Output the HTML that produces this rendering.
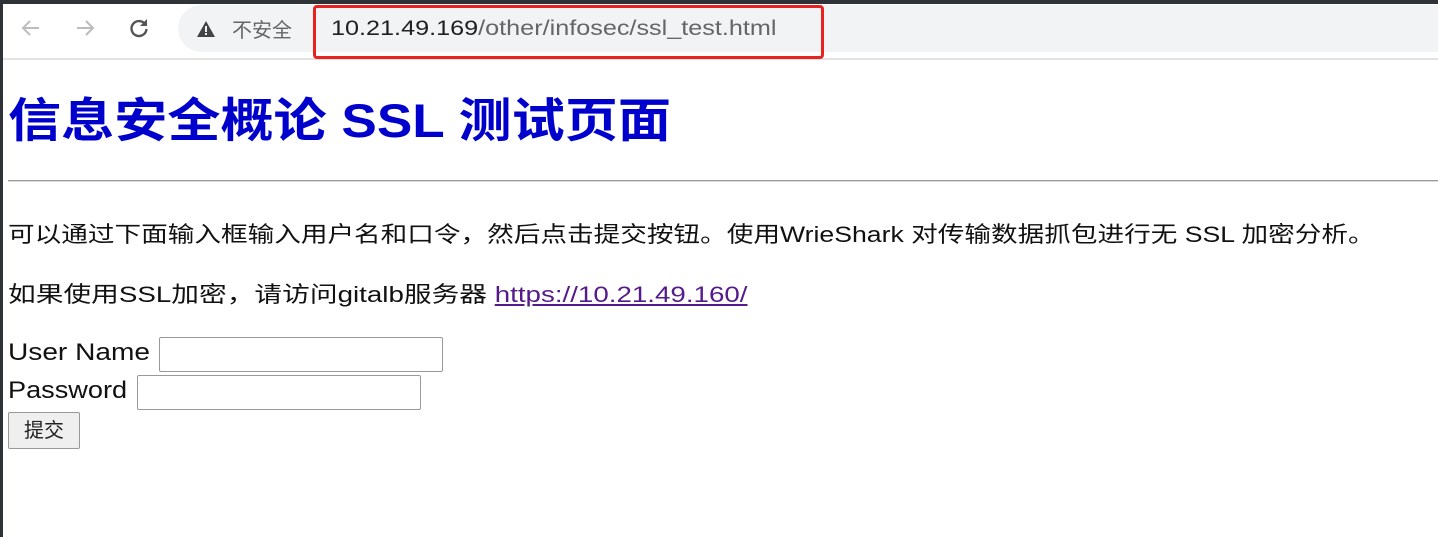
<!DOCTYPE html>
<html><head><meta charset="utf-8"><style>
*{margin:0;padding:0;box-sizing:border-box}
body{width:1438px;height:537px;overflow:hidden;background:#fff;position:relative;font-family:"Liberation Sans","Noto Sans CJK SC",sans-serif}
.a{position:absolute;white-space:nowrap}
.s{transform-origin:0 50%}
</style></head><body>
<div class="a" style="left:0;top:0;width:1438px;height:4px;background:#2f3337"></div>
<div class="a" style="left:0;top:0;width:3px;height:537px;background:#2f3337"></div>
<div class="a" style="left:178px;top:5px;width:1260px;height:47px;background:#f1f3f4;border-radius:24px 0 0 24px"></div>
<div class="a" style="left:3px;top:58px;width:1435px;height:2px;background:#e3e3e3"></div>
<svg class="a" style="left:20px;top:17px" width="22" height="22" viewBox="0 0 22 22"><path d="M19 11H4M10 4L3 11l7 7" stroke="#bcbcbc" stroke-width="2" fill="none"/></svg>
<svg class="a" style="left:74px;top:17px" width="22" height="22" viewBox="0 0 22 22"><path d="M3 11h15M12 4l7 7-7 7" stroke="#bcbcbc" stroke-width="2" fill="none"/></svg>
<svg class="a" style="left:127px;top:16px" width="24" height="24" viewBox="0 0 24 24"><path d="M18 8A7.5 7.5 0 1 0 19.5 13" stroke="#555" stroke-width="2.4" fill="none"/><path d="M20 3v7h-7z" fill="#555"/></svg>
<svg class="a" style="left:196px;top:20px" width="20" height="18" viewBox="0 0 20 18"><path d="M10 1L19 17H1z" fill="#444"/><rect x="9" y="6" width="2" height="6" fill="#f1f3f4"/><rect x="9" y="13" width="2" height="2" fill="#f1f3f4"/></svg>
<div class="a" style="left:232px;top:14px;font-size:20px;color:#666">不安全</div>
<div class="a" style="left:313px;top:5px;width:511px;height:54px;border:3px solid #e8231f;border-radius:4px"></div>
<div class="a s" style="left:331px;top:17px;font-size:21px;color:#202124;transform:scaleX(1.2)">10.21.49.169<span style="color:#666">/other/infosec/ssl_test.html</span></div>
<div class="a s" style="left:8px;top:82px;font-size:47px;font-weight:bold;color:#0000cc;transform:scaleX(1.13)">信息安全概论 SSL 测试页面</div>
<div class="a" style="left:8px;top:180px;width:1430px;height:2px;border-top:1px solid #999;border-bottom:1px solid #ddd"></div>
<div class="a s" style="left:8px;top:217px;font-size:22px;color:#111;transform:scaleX(1.21)">可以通过下面输入框输入用户名和口令，然后点击提交按钮。使用WrieShark 对传输数据抓包进行无 SSL 加密分析。</div>
<div class="a s" style="left:8px;top:277px;font-size:22px;color:#111;transform:scaleX(1.26)">如果使用SSL加密，请访问gitalb服务器 <span style="color:#551a8b;text-decoration:underline">https://10.21.49.160/</span></div>
<div class="a s" style="left:8px;top:339px;font-size:24px;color:#111;transform:scaleX(1.17)">User Name</div>
<div class="a" style="left:159px;top:337px;width:284px;height:35px;border:1px solid #999;border-radius:2px"></div>
<div class="a s" style="left:8px;top:377px;font-size:24px;color:#111;transform:scaleX(1.13)">Password</div>
<div class="a" style="left:137px;top:375px;width:284px;height:35px;border:1px solid #999;border-radius:2px"></div>
<div class="a" style="left:8px;top:412px;width:72px;height:37px;border:1px solid #999;border-radius:2px;background:#efefef;font-size:20px;color:#222;text-align:center;line-height:37px">提交</div>
</body></html>
